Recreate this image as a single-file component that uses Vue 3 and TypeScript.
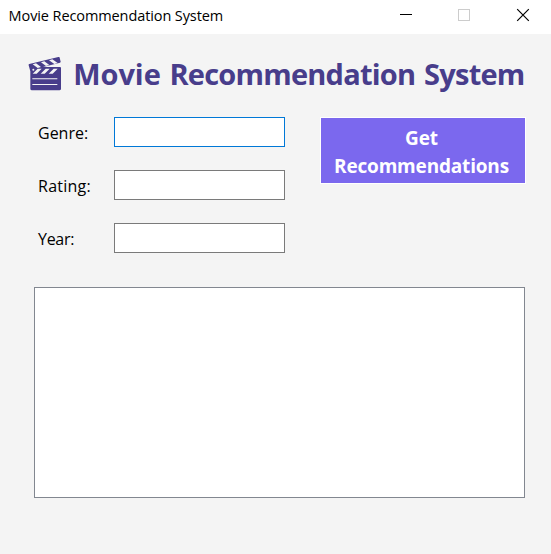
<template>
  <div class="window">
    <header class="titlebar">
      <span class="caption">Movie Recommendation System</span>
      <div class="controls">
        <svg viewBox="0 0 58 34" width="58" height="34" shape-rendering="crispEdges">
          <path d="M23 14.5h12" stroke="#000" />
        </svg>
        <svg viewBox="0 0 58 34" width="58" height="34" shape-rendering="crispEdges">
          <rect x="23.5" y="9.5" width="11" height="11" fill="none" stroke="#ccc" />
        </svg>
        <svg viewBox="0 0 58 34" width="58" height="34">
          <path d="M24.2 9.2l11.6 11.6M35.8 9.2L24.2 20.8" stroke="#000" stroke-width="1.2" />
        </svg>
      </div>
    </header>

    <main class="content">
      <h1 class="heading">
        <svg class="clapper" viewBox="0 0 102 105" width="34" height="35">
          <path
            fill="#483d8b"
            d="M2 25q-1-3 2-4L91 0q3-1 4 2l3 12q0 2-2 3L45 30h51q3 0 3 3v62q0 5-5 5H12q-5 0-5-5V43z"
          />
          <g fill="#f4f4f4">
            <path d="M14 22l10-3 15 11-10 3zM39 16l10-3 15 11-10 3zM63 10l10-3 16 11-10 3z" />
            <path d="M29 35h12L26 50H14zM53 35h12L50 50H38zM77 35h12L74 50H62z" />
            <path d="M13 64h75v3H13zM13 81h75v3H13z" />
          </g>
          <circle cx="16" cy="38" r="3" fill="#f4f4f4" />
        </svg>
        <span class="heading-text"><span class="first">Movie</span> Recommendation System</span>
      </h1>

      <div class="form">
        <div class="fields">
          <label v-for="field in fields" :key="field.id" class="field">
            <span :class="['label', field.id]">{{ field.label }}</span>
            <input
              v-model="field.value"
              type="text"
              :class="['entry', { active: activeField === field.id }]"
              @focus="activeField = field.id"
            />
          </label>
        </div>
        <button class="submit" type="button">
          <span class="line-get">Get</span>
          <span class="line-rec">Recommendations</span>
        </button>
      </div>

      <div class="results"></div>
    </main>
  </div>
</template>

<script setup lang="ts">
import { ref } from 'vue'

interface Field {
  id: string
  label: string
  value: string
}

const fields = ref<Field[]>([
  { id: 'genre', label: 'Genre:', value: '' },
  { id: 'rating', label: 'Rating:', value: '' },
  { id: 'year', label: 'Year:', value: '' }
])

const activeField = ref('genre')
</script>

<style>
body {
  margin: 0;
  background: #f4f4f4;
}
</style>

<style scoped>
.window {
  width: 551px;
  height: 554px;
  overflow: hidden;
  background: #f4f4f4;
  color: #000;
  font-family: 'Open Sans', 'Noto Sans', sans-serif;
}

.titlebar {
  display: flex;
  justify-content: space-between;
  height: 34px;
  background: #fff;
}

.caption {
  padding-left: 8.6px;
  font-size: 14.5px;
  line-height: 31px;
  letter-spacing: -0.1px;
  white-space: nowrap;
}

.controls {
  display: flex;
  width: 174px;
}

.content {
  padding: 0 26px 0 34px;
}

.heading {
  display: flex;
  align-items: flex-start;
  height: 60px;
  margin: 0 0 0 -6px;
  padding-top: 23px;
  color: #483d8b;
  font-size: 29px;
  font-weight: 700;
  line-height: 34px;
  white-space: nowrap;
}

.clapper {
  flex: none;
  margin-right: 11.2px;
}

.heading-text {
  letter-spacing: -0.77px;
  word-spacing: 2px;
}

.first {
  letter-spacing: -0.05px;
}

.form {
  display: flex;
  justify-content: space-between;
  align-items: flex-start;
}

.fields {
  display: flex;
  flex-direction: column;
  gap: 23px;
}

.field {
  display: flex;
}

.label {
  width: 80px;
  padding-left: 4px;
  box-sizing: border-box;
  font-size: 16px;
  line-height: 32px;
  height: 30px;
}

.label.rating {
  letter-spacing: 0.25px;
}

.label.year {
  letter-spacing: -0.3px;
}

.entry {
  box-sizing: border-box;
  width: 171px;
  height: 30px;
  padding: 0 5px;
  border: 1px solid #7a7a7a;
  outline: none;
  background: #fff;
  font: inherit;
}

.entry.active {
  border-color: #0078d7;
}

.submit {
  display: flex;
  flex-direction: column;
  align-items: center;
  width: 204px;
  height: 65px;
  margin: 1px 0 0;
  padding: 6px 3px 0 0;
  border: none;
  background: #7b68ee;
  box-shadow: 0 0 0 1px #fff;
  color: #fff;
  font-family: inherit;
  font-size: 19px;
  font-weight: 700;
  line-height: 28px;
}

.line-rec {
  letter-spacing: -0.18px;
}

.results {
  box-sizing: border-box;
  height: 211px;
  margin-top: 34px;
  border: 1px solid #828790;
  background: #fff;
}
</style>
